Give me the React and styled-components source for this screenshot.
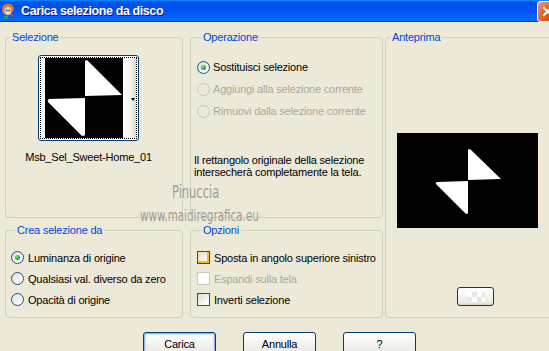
import styled, { createGlobalStyle } from "styled-components";

const Global = createGlobalStyle`
  html, body {
    margin: 0;
    padding: 0;
    background: #ece9d8;
    overflow: hidden;
  }
`;

const Window = styled.div`
  position: relative;
  width: 549px;
  height: 351px;
  overflow: hidden;
  background: #ece9d8;
  font-family: "Liberation Sans", Arial, sans-serif;
  font-size: 11px;
  letter-spacing: -0.2px;
  color: #000;
`;

const TitleBar = styled.div`
  height: 22px;
  display: flex;
  align-items: center;
  background: linear-gradient(
    to bottom,
    #0997ff 0%,
    #0053ee 8%,
    #0050ee 40%,
    #0066ff 88%,
    #0066ff 93%,
    #005bff 95%,
    #003dd7 96%,
    #003dd7 100%
  );
`;

const TitleText = styled.span`
  margin-left: 6px;
  flex: 1;
  color: #fff;
  font-family: "Liberation Sans", Arial, sans-serif;
  font-weight: bold;
  font-size: 12.5px;
  letter-spacing: -0.4px;
  text-shadow: 1px 1px #0f1089;
`;

const CloseButton = styled.div`
  width: 21px;
  height: 21px;
  margin-right: -9px;
  box-sizing: border-box;
  border: 1px solid #fff;
  border-radius: 3px;
  background: radial-gradient(circle at 90% 90%, #cc4600 0%, #dc6527 55%, #e5a090 100%);
  display: flex;
  align-items: center;
  justify-content: center;
`;

const Body = styled.div`
  padding: 9px 0 0 5px;
  display: grid;
  grid-template-columns: 178px 7px 193px 2px 170px;
  grid-template-rows: 187px 94px;
  row-gap: 6px;
`;

const Group = styled.fieldset`
  grid-column: ${(p) => p.$col};
  grid-row: ${(p) => p.$row};
  margin: 0;
  min-width: 0;
  padding: ${(p) => p.$pad || "0"};
  border: 1px solid #d0d0bf;
  border-radius: 4px;
  display: flex;
  flex-direction: column;
  align-items: flex-start;
`;

const Legend = styled.legend`
  margin-left: 4px;
  padding: 0 2px;
  color: #0046d5;
  font-size: 11px;
  line-height: 13px;
`;

const ThumbWrap = styled.div`
  margin-left: 32px;
  width: 101px;
  display: flex;
  flex-direction: column;
  align-items: center;
`;

const ThumbButton = styled.div`
  width: 101px;
  height: 86px;
  box-sizing: border-box;
  border: 1px solid #003c74;
  border-radius: 3px;
  background: #fff;
  padding: 1px;
`;

const ThumbFocus = styled.div`
  height: 100%;
  box-sizing: border-box;
  border: 1px dotted #000;
  display: flex;
  padding: 0 0 0 4px;
`;

const DropStrip = styled.div`
  flex: 1;
  background: linear-gradient(to right, #fff 0%, #f4f3ee 60%, #dcdad0 100%);
  display: flex;
  align-items: center;
  justify-content: flex-end;
  padding-right: 1px;
`;

const Arrow = styled.span`
  width: 0;
  height: 0;
  border-left: 2.5px solid transparent;
  border-right: 2.5px solid transparent;
  border-top: 3px solid #000;
  margin-top: 2px;
`;

const FileName = styled.div`
  margin-top: 10px;
  line-height: 13px;
  white-space: nowrap;
`;

const OptionList = styled.div`
  display: flex;
  flex-direction: column;
`;

const OptionRow = styled.label`
  height: ${(p) => p.$h}px;
  display: flex;
  align-items: center;
  gap: ${(p) => p.$gap || 4}px;
  white-space: nowrap;
  color: ${(p) => (p.$disabled ? "#aca899" : "#000")};
`;

const Radio = styled.span`
  width: 13px;
  height: 13px;
  box-sizing: border-box;
  border-radius: 50%;
  border: 1px solid ${(p) => (p.$disabled ? "#cac8bb" : "#1c5180")};
  background: ${(p) =>
    p.$disabled ? "#ece9d8" : "linear-gradient(135deg, #dcdcd7 0%, #fff 90%)"};
  display: flex;
  align-items: center;
  justify-content: center;
  flex-shrink: 0;

  &::after {
    content: "";
    display: ${(p) => (p.$checked ? "block" : "none")};
    width: 5px;
    height: 5px;
    border-radius: 50%;
    background: radial-gradient(circle at 35% 35%, #7be07b 0%, #21a121 70%);
  }
`;

const Check = styled.span`
  width: 13px;
  height: 13px;
  box-sizing: border-box;
  border: 1px solid ${(p) => (p.$disabled ? "#cac8bb" : "#1c5180")};
  background: ${(p) =>
    p.$disabled ? "#fff" : "linear-gradient(135deg, #dcdcd7 0%, #fff 90%)"};
  box-shadow: ${(p) =>
    p.$hover ? "inset -2px -2px #f8b636, inset 2px 2px #fedf9c" : "none"};
  flex-shrink: 0;
`;

const Description = styled.p`
  margin: 33px 0 0 -3px;
  line-height: 11.5px;
`;

const PreviewBox = styled.div`
  margin-left: 11px;
  width: 141px;
  height: 95px;
  background: #000;
`;

const SmallButton = styled.div`
  margin: 59px 0 0 71px;
  width: 37px;
  height: 19px;
  box-sizing: border-box;
  border: 1px solid #003c74;
  border-radius: 3px;
  background: linear-gradient(to bottom, #fff, #ecebe6 86%, #d6d0c5);
  display: flex;
  align-items: center;
  justify-content: center;
`;

const Checker = styled.span`
  width: 18px;
  height: 10px;
  background-image: linear-gradient(45deg, #e6e6e6 25%, transparent 25%, transparent 75%, #e6e6e6 75%),
    linear-gradient(45deg, #e6e6e6 25%, transparent 25%, transparent 75%, #e6e6e6 75%);
  background-size: 10px 10px;
  background-position: 0 0, 5px 5px;
  background-color: #fff;
`;

const ButtonRow = styled.div`
  display: flex;
  gap: 27px;
  padding: 14px 0 0 143px;
`;

const Button = styled.div`
  width: 73px;
  height: 23px;
  box-sizing: border-box;
  border: 1px solid #003c74;
  border-radius: 3px;
  background: linear-gradient(to bottom, #fff, #ecebe6 86%, #d6d0c5);
  box-shadow: ${(p) =>
    p.$default ? "inset 0 0 0 1px #98b8ea, inset 0 0 0 2px #cee7ff" : "none"};
  display: flex;
  align-items: center;
  justify-content: center;
  font-size: 11px;
`;

const Watermark = styled.div`
  position: absolute;
  left: ${(p) => p.$x}px;
  top: ${(p) => p.$y}px;
  color: rgba(120, 120, 120, 0.7);
  font-family: "DejaVu Sans Condensed", "Liberation Sans Narrow", sans-serif;
  font-weight: 200;
  font-size: ${(p) => p.$size}px;
  letter-spacing: 0;
  transform: scaleX(${(p) => p.$sx});
  transform-origin: left top;
  white-space: nowrap;
  pointer-events: none;
`;

const AppIcon = () => (
  <svg width="14" height="16" viewBox="0 0 14 16" style={{ marginLeft: 1 }}>
    <path d="M2 3 Q6 -1 11 2 Q14 5 12 9 L10 7 Q8 10 5 9 L3 12 Q0 8 2 3Z" fill="#e07a2a" />
    <ellipse cx="7" cy="8" rx="3.6" ry="4" fill="#f4d2b0" />
    <circle cx="5.6" cy="7.4" r="0.9" fill="#1a4fa0" />
    <circle cx="8.4" cy="7.4" r="0.9" fill="#1a4fa0" />
    <path d="M3 13 L6 12 L8 15 L4 16Z" fill="#2aa12a" />
    <path d="M9 12 L12 11 L12 14Z" fill="#d04040" />
  </svg>
);

const Thumb = () => (
  <svg width="78" height="80" viewBox="0 0 78 80" style={{ display: "block" }}>
    <rect width="78" height="80" fill="#000" />
    <path d="M40 3 Q42 1 44 4 L77 37 L40 38 Z" fill="#fff" />
    <path d="M4 41 L40 40 L40 77 Q38 79 36 77 L3 44 Q2 42 4 41Z" fill="#fff" />
  </svg>
);

const PreviewShape = () => (
  <svg width="141" height="95" viewBox="0 0 141 95" style={{ display: "block" }}>
    <path d="M71 17 Q72 15 74 17 L104 46 L71 47 Z" fill="#fff" />
    <path d="M40 49 L71 48 L71 80 Q70 82 68 80 L39 51 Q38 50 40 49Z" fill="#fff" />
  </svg>
);

export default function App() {
  return (
    <Window>
      <Global />
      <TitleBar>
        <AppIcon />
        <TitleText>Carica selezione da disco</TitleText>
        <CloseButton>
          <svg width="11" height="11" viewBox="0 0 11 11">
            <path d="M2 2 L9 9 M9 2 L2 9" stroke="#fff" strokeWidth="2" strokeLinecap="square" />
          </svg>
        </CloseButton>
      </TitleBar>

      <Body>
        <Group $col={1} $row={1} $pad="11px 0 0 0">
          <Legend>Selezione</Legend>
          <ThumbWrap>
            <ThumbButton>
              <ThumbFocus>
                <Thumb />
                <DropStrip>
                  <Arrow />
                </DropStrip>
              </ThumbFocus>
            </ThumbButton>
            <FileName>Msb_Sel_Sweet-Home_01</FileName>
          </ThumbWrap>
        </Group>

        <Group $col={3} $row={1} $pad="12px 0 0 6px">
          <Legend>Operazione</Legend>
          <OptionList>
            <OptionRow $h={22} $gap={3}>
              <Radio $checked />
              Sostituisci selezione
            </OptionRow>
            <OptionRow $h={22} $gap={3} $disabled>
              <Radio $disabled />
              Aggiungi alla selezione corrente
            </OptionRow>
            <OptionRow $h={22} $gap={3} $disabled>
              <Radio $disabled />
              Rimuovi dalla selezione corrente
            </OptionRow>
          </OptionList>
          <Description>
            Il rettangolo originale della selezione
            <br />
            intersecherà completamente la tela.
          </Description>
        </Group>

        <Group $col={5} $row="1 / span 2" $pad="89px 0 0 0">
          <Legend>Anteprima</Legend>
          <PreviewBox>
            <PreviewShape />
          </PreviewBox>
          <SmallButton>
            <Checker />
          </SmallButton>
        </Group>

        <Group $col={1} $row={2} $pad="10px 0 0 5px">
          <Legend>Crea selezione da</Legend>
          <OptionList>
            <OptionRow $h={21}>
              <Radio $checked />
              Luminanza di origine
            </OptionRow>
            <OptionRow $h={21}>
              <Radio />
              Qualsiasi val. diverso da zero
            </OptionRow>
            <OptionRow $h={21}>
              <Radio />
              Opacità di origine
            </OptionRow>
          </OptionList>
        </Group>

        <Group $col={3} $row={2} $pad="10px 0 0 6px">
          <Legend>Opzioni</Legend>
          <OptionList>
            <OptionRow $h={21}>
              <Check $hover />
              Sposta in angolo superiore sinistro
            </OptionRow>
            <OptionRow $h={21} $disabled>
              <Check $disabled />
              Espandi sulla tela
            </OptionRow>
            <OptionRow $h={21}>
              <Check />
              Inverti selezione
            </OptionRow>
          </OptionList>
        </Group>
      </Body>

      <ButtonRow>
        <Button $default>Carica</Button>
        <Button>Annulla</Button>
        <Button>?</Button>
      </ButtonRow>

      <Watermark $x={172} $y={182} $size={17} $sx={0.75}>
        Pinuccia
      </Watermark>
      <Watermark $x={140} $y={206} $size={16} $sx={0.72}>
        www.maidiregrafica.eu
      </Watermark>
    </Window>
  );
}
